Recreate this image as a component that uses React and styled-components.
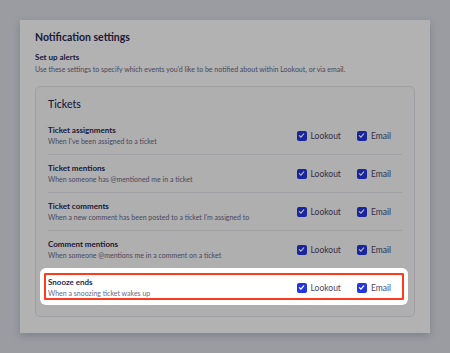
import React from "react";
import styled, { createGlobalStyle } from "styled-components";

const Global = createGlobalStyle`
  html, body { margin: 0; padding: 0; }
  body {
    background: #dde0e9;
    font-family: Lato, "Noto Sans", sans-serif;
    overflow: hidden;
  }
`;

const Page = styled.div`
  padding: 20px;
  width: 410px;
`;

const Card = styled.section`
  background: #ffffff;
  padding: 10px 15px 16px;
  box-shadow: 0 3px 8px rgba(20, 20, 40, 0.18);
`;

const Title = styled.h1`
  margin: 0;
  font-size: 10.5px;
  line-height: 14px;
  font-weight: 700;
  color: #2a2850;
`;

const Subtitle = styled.h2`
  margin: 8px 0 0;
  font-size: 8px;
  line-height: 11px;
  font-weight: 700;
  color: #2a2850;
`;

const Lead = styled.p`
  margin: 1px 0 0;
  font-size: 7px;
  line-height: 10px;
  color: #6a6888;
`;

const Box = styled.div`
  margin-top: 12px;
  border: 1px solid #e4e4ea;
  border-radius: 5px;
  background: #fbfbfc;
  padding: 8px 12px 10px;
`;

const BoxHeading = styled.h3`
  margin: 0 0 4px;
  font-size: 10.5px;
  line-height: 18px;
  font-weight: 500;
  color: #2a2850;
`;

const Row = styled.div`
  display: flex;
  align-items: center;
  padding: 7px 11px 7px 0;
  border-top: ${(p) => (p.$first ? "none" : "1px solid #e6e6ec")};
  position: relative;
  ${(p) =>
    p.$highlight &&
    `
    z-index: 2;
    &::before {
      content: "";
      position: absolute;
      top: -1px;
      bottom: 1px;
      left: -8px;
      right: -6px;
      background: #ffffff;
      border-radius: 6px;
      box-shadow: 0 0 0 9999px rgba(0, 0, 0, 0.3);
      z-index: -1;
    }
    &::after {
      content: "";
      position: absolute;
      top: 4px;
      bottom: 6px;
      left: -4px;
      right: -2px;
      border: 2px solid #ff3b1f;
      border-radius: 1px;
      pointer-events: none;
    }
  `}
`;

const RowText = styled.div`
  flex: 1;
  min-width: 0;
`;

const RowTitle = styled.div`
  font-size: 8px;
  line-height: 12px;
  font-weight: 700;
  color: #2a2850;
`;

const RowDesc = styled.div`
  font-size: 7px;
  line-height: 11px;
  color: #6a6888;
`;

const Options = styled.div`
  display: flex;
  align-items: center;
  gap: 16px;
`;

const Option = styled.label`
  display: flex;
  align-items: center;
  gap: 4px;
  font-size: 8.5px;
  line-height: 12px;
  color: #4a4868;
`;

const Check = styled.span`
  width: 10px;
  height: 10px;
  border-radius: 2px;
  background: #2536e0;
  display: flex;
  align-items: center;
  justify-content: center;
`;

const CheckBox = () => (
  <Check>
    <svg width="7" height="7" viewBox="0 0 10 10" fill="none">
      <path d="M2 5.2 L4.2 7.4 L8.2 2.8" stroke="#fff" strokeWidth="1.8" strokeLinecap="round" strokeLinejoin="round" />
    </svg>
  </Check>
);

const rows = [
  { title: "Ticket assignments", desc: "When I've been assigned to a ticket" },
  { title: "Ticket mentions", desc: "When someone has @mentioned me in a ticket" },
  { title: "Ticket comments", desc: "When a new comment has been posted to a ticket I'm assigned to" },
  { title: "Comment mentions", desc: "When someone @mentions me in a comment on a ticket" },
  { title: "Snooze ends", desc: "When a snoozing ticket wakes up", highlight: true },
];

export default function App() {
  return (
    <>
      <Global />
      <Page>
        <Card>
          <Title>Notification settings</Title>
          <Subtitle>Set up alerts</Subtitle>
          <Lead>
            Use these settings to specify which events you'd like to be notified about within Lookout, or via email.
          </Lead>
          <Box>
            <BoxHeading>Tickets</BoxHeading>
            {rows.map((r, i) => (
              <Row key={r.title} $first={i === 0} $highlight={r.highlight}>
                <RowText>
                  <RowTitle>{r.title}</RowTitle>
                  <RowDesc>{r.desc}</RowDesc>
                </RowText>
                <Options>
                  <Option>
                    <CheckBox />
                    Lookout
                  </Option>
                  <Option>
                    <CheckBox />
                    Email
                  </Option>
                </Options>
              </Row>
            ))}
          </Box>
        </Card>
      </Page>
    </>
  );
}
